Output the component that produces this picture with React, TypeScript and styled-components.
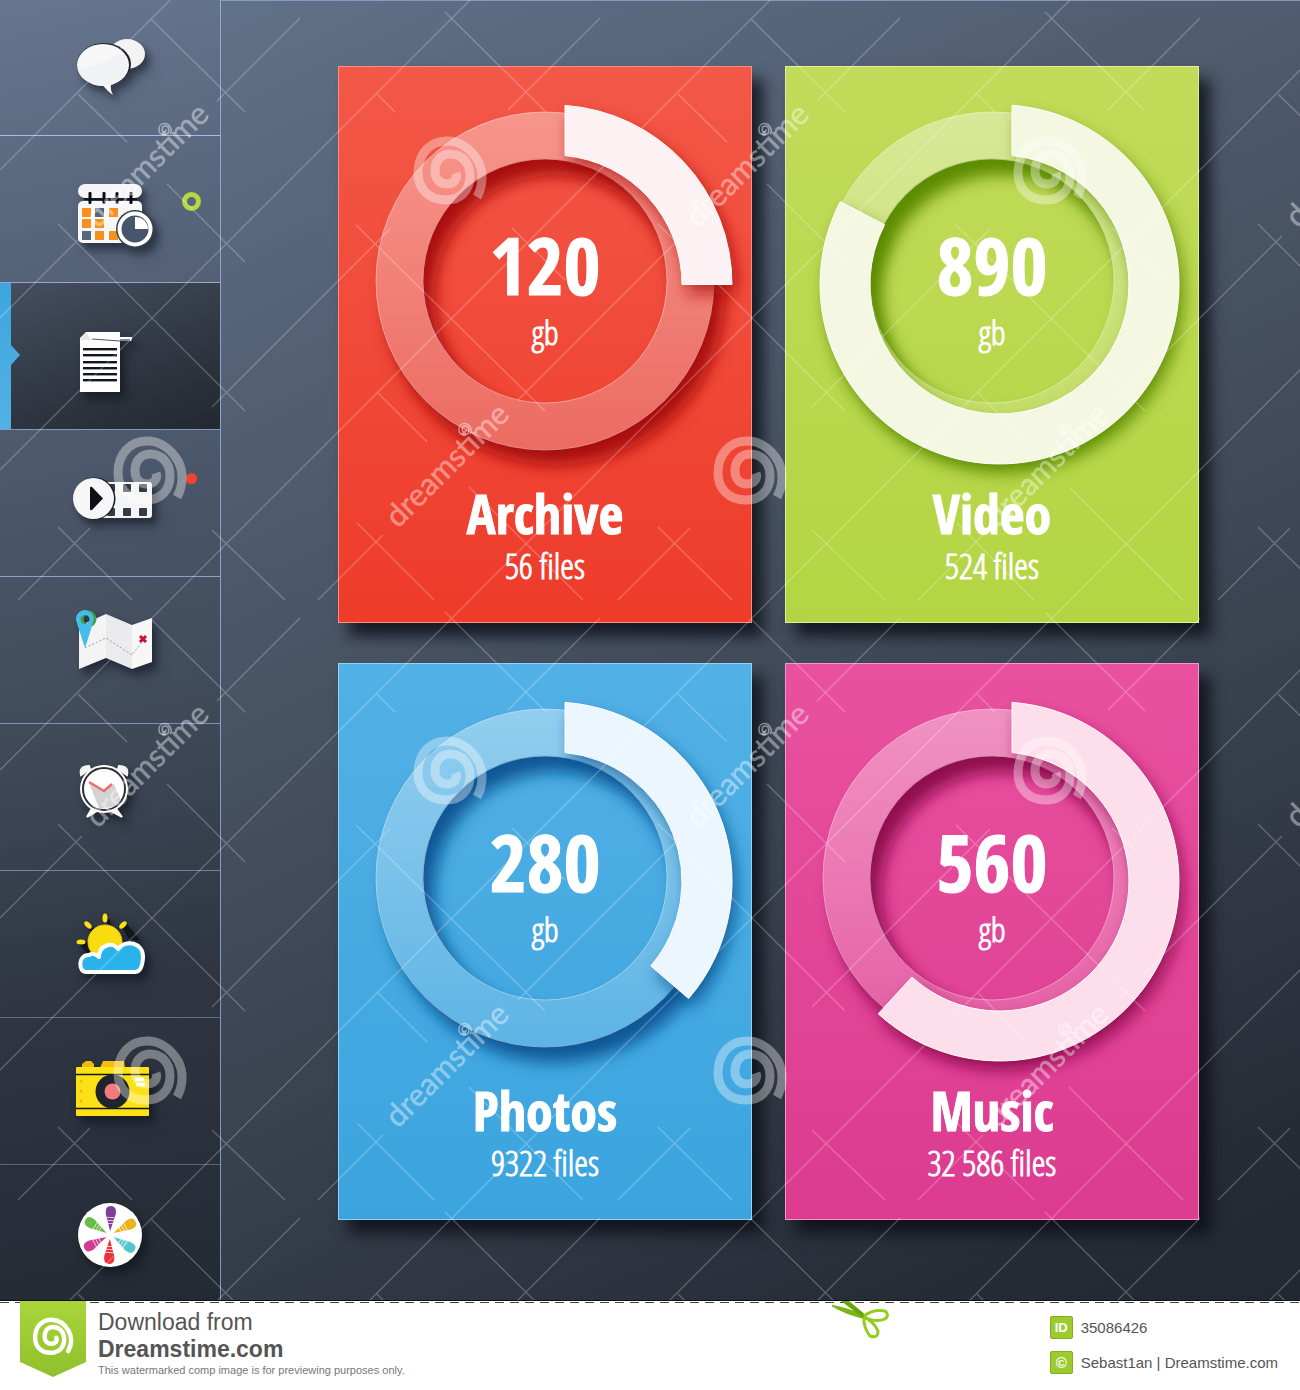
import React from "react";
import styled, { createGlobalStyle, css } from "styled-components";

const narrowBold = `"Open Sans Condensed", "Roboto Condensed", "Liberation Sans Narrow", sans-serif`;
const narrowLight = `"Open Sans Condensed Light", "Roboto Condensed", "Noto Sans Condensed", "Liberation Sans Narrow", "Open Sans Condensed", sans-serif`;

const GlobalStyle = createGlobalStyle`
  *, *::before, *::after { box-sizing: border-box; }
  body {
    margin: 0;
    background: #fff;
    font-family: "Liberation Sans", Arial, sans-serif;
  }
`;

const Board = styled.div`
  position: relative;
  display: grid;
  grid-template-columns: 221px 1fr;
  overflow: hidden;
`;

const Sidebar = styled.nav`
  display: flex;
  flex-direction: column;
  border-right: 1px solid rgba(160, 190, 235, 0.75);
  background: linear-gradient(168deg, #66768f 0%, #525f74 25%, #424d5d 52%, #2f3642 75%, #242a34 100%);
`;

const NavButton = styled.button<{ $line: string; $active?: boolean; $height?: number }>`
  position: relative;
  display: flex;
  justify-content: center;
  align-items: flex-start;
  height: ${(p) => p.$height ?? 147}px;
  padding: 25px 0 0;
  border: 0;
  border-bottom: 1px solid ${(p) => p.$line};
  background: none;
  cursor: pointer;
  ${(p) =>
    p.$active &&
    css`
      background: linear-gradient(160deg, #454f5f 0%, #343c48 45%, #232830 100%);
      &::before {
        content: "";
        position: absolute;
        left: 0;
        top: 0;
        width: 20px;
        height: 100%;
        background: linear-gradient(#3ea5de, #52b1e6);
        clip-path: polygon(0 0, 11px 0, 11px 62px, 20px 72px, 11px 82px, 11px 100%, 0 100%);
      }
    `}
`;

const Glyph = styled.svg`
  width: 96px;
  height: 96px;
  overflow: visible;
  filter: drop-shadow(4px 5px 3px rgba(10, 14, 22, 0.35)) drop-shadow(5px 7px 5px rgba(10, 14, 22, 0.3));
`;

const RingBadge = styled.span`
  position: absolute;
  right: 19px;
  top: 56px;
  width: 19px;
  height: 19px;
  border: 5px solid #b5d73f;
  border-radius: 50%;
`;

const DotBadge = styled.span`
  position: absolute;
  right: 23px;
  top: 43px;
  width: 11px;
  height: 11px;
  border-radius: 50%;
  background: #f04432;
`;

const Main = styled.main`
  display: grid;
  grid-template-columns: 1fr 1fr;
  gap: 40px 33px;
  align-content: start;
  padding: 65px 101px 80px 117px;
  border-top: 1px solid rgba(160, 190, 235, 0.75);
  background: linear-gradient(155deg, #617189 0%, #4d596b 32%, #3a4350 62%, #262c36 90%, #222831 100%);
`;

const Card = styled.article<{ $from: string; $to: string; $edge: string }>`
  display: flex;
  flex-direction: column;
  align-items: center;
  height: 557px;
  border: 1px solid ${(p) => p.$edge};
  background: linear-gradient(${(p) => p.$from}, ${(p) => p.$to});
  box-shadow: 11px 13px 14px rgba(10, 13, 20, 0.8);
  color: #fff;
  -webkit-text-stroke: 1px #fff;
`;

const Gauge = styled.div`
  display: grid;
  justify-items: center;
  > * { grid-area: 1 / 1; }
`;

const Dial = styled.svg`
  width: 412px;
  height: 412px;
  overflow: visible;
`;

const Reading = styled.div`
  display: flex;
  flex-direction: column;
  align-items: center;
  padding-top: 152px;
  z-index: 1;
`;

const Amount = styled.strong`
  font-family: ${narrowBold};
  font-size: 80px;
  line-height: 90px;
  font-weight: 700;
`;

const Unit = styled.span`
  font-family: ${narrowLight};
  font-size: 34px;
  line-height: 46px;
  font-weight: 300;
`;

const Title = styled.h2`
  margin: 0;
  font-family: ${narrowBold};
  font-size: 54px;
  line-height: 68px;
  font-weight: 700;
`;

const Files = styled.p`
  margin: 0;
  font-family: ${narrowLight};
  font-size: 35px;
  line-height: 38px;
  font-weight: 300;
`;

const Overlay = styled.svg`
  position: absolute;
  inset: 0;
  width: 100%;
  height: 100%;
  pointer-events: none;
`;

const Footer = styled.footer`
  position: relative;
  display: flex;
  justify-content: space-between;
  height: 90px;
  padding: 0 22px 0 20px;
  border-top: 1px solid #111;
  background: repeating-linear-gradient(90deg, #444 0 9px, transparent 9px 15px) 0 1px / 100% 1px no-repeat, #fff;
  color: #555;
`;

const Brand = styled.a`
  display: flex;
  gap: 12px;
  color: inherit;
  text-decoration: none;
`;

const Flag = styled.svg`
  width: 66px;
  height: 78px;
`;

const BrandText = styled.div`
  display: flex;
  flex-direction: column;
  padding-top: 8px;
`;

const BrandLine = styled.span<{ $bold?: boolean }>`
  font-size: 23px;
  line-height: 27px;
  font-weight: ${(p) => (p.$bold ? 700 : 400)};
`;

const Notice = styled.small`
  font-size: 11px;
  line-height: 15px;
  color: #777;
`;

const Scissors = styled.svg`
  position: absolute;
  left: 64%;
  top: 0;
  width: 60px;
  height: 42px;
`;

const Credits = styled.ul`
  display: flex;
  flex-direction: column;
  gap: 12px;
  margin: 0;
  padding: 15px 0 0;
  list-style: none;
`;

const Credit = styled.li`
  display: flex;
  align-items: center;
  gap: 8px;
  font-size: 15px;
  line-height: 23px;
`;

const Tag = styled.span<{ $size: number }>`
  width: 23px;
  height: 23px;
  border: 1px solid #86ad1f;
  border-radius: 2px;
  background: #9dcb2f;
  color: #fff;
  font-size: ${(p) => p.$size}px;
  line-height: 21px;
  font-weight: 700;
  text-align: center;
`;

const SPIRAL =
  "M27 27C33 16 34 2 28 -9C20 -23 8 -29 -3 -29C-20 -29 -32 -16 -32 3C-32 19 -21 30 -4 30C11 30 20 20 20 6C20 -8 11 -16 0 -16C-10 -16 -15 -8 -15 1C-15 10 -9 14 -3 14C4 14 8 9 6 3";

const ChatIcon = () => (
  <>
    <ellipse cx="65" cy="29" rx="18" ry="15" fill="#f3f3f4" />
    <ellipse cx="42" cy="39" rx="27" ry="21" fill="#1d232d" />
    <ellipse cx="41" cy="40" rx="26" ry="21" fill="#f7f7f8" />
    <path d="M40 59Q46 67 51 70Q48 65 49 58Z" fill="#f7f7f8" />
    <path d="M16 43Q34 42 59 28Q69 38 64 47Q57 60 41 60Q18 58 16 43Z" fill="#f1f2f4" />
  </>
);

const CalendarIcon = () => (
  <>
    <rect x="16" y="23" width="64" height="14" rx="7" fill="#f5f5f6" />
    <rect x="22" y="37" width="53" height="2" fill="#14181f" />
    <rect x="16" y="40" width="64" height="42" rx="5" fill="#f7f7f7" />
    {[28, 42, 55, 69].map((x) => (
      <rect key={x} x={x - 1.5} y="31" width="3" height="12" rx="1" fill="#0b0d12" />
    ))}
    {[
      [20, 47, "#f7901e"], [33, 47, "#55657b"], [47, 47, "#f7901e"],
      [20, 58, "#f7901e"], [33, 58, "#f7901e"],
      [20, 70, "#55657b"], [33, 70, "#f7901e"], [47, 70, "#f7901e"],
    ].map(([x, y, fill]) => (
      <rect key={`${x}-${y}`} x={x} y={y} width="9" height="9" fill={String(fill)} />
    ))}
    <circle cx="73" cy="68" r="19" fill="#38434f" />
    <circle cx="73" cy="68" r="15.5" fill="#47566a" stroke="#fff" strokeWidth="4" />
    <path d="M73 68V56A12 12 0 0 1 86 68Z" fill="#fff" />
  </>
);

const DocumentIcon = () => (
  <>
    <path d="M24 24H58V84H18V30Z" fill="#fff" />
    <path d="M18 32L24 24L29 32Z" fill="#e4e6e9" />
    <path d="M30 30H70L69 33H34Z" fill="#fff" />
    <path d="M30 31L58 33" stroke="#555b66" strokeWidth="1" fill="none" />
    <path d="M58 29H70L69 32H58Z" fill="#fff" />
    <path d="M58 32H68" stroke="#0b0d12" strokeWidth="1" fill="none" />
    {[41, 47, 54, 60, 66, 72].map((y) => (
      <rect key={y} x="21" y={y - 1} width="34" height="2.4" fill="#12161d" />
    ))}
  </>
);

const VideoIcon = () => (
  <>
    <rect x="38" y="27" width="52" height="36" rx="3" fill="#f5f5f6" />
    {[45, 61, 77].map((x) => (
      <React.Fragment key={x}>
        <rect x={x} y="29" width="8" height="8" rx="1" fill="#333b47" />
        <rect x={x} y="53" width="8" height="8" rx="1" fill="#333b47" />
      </React.Fragment>
    ))}
    <circle cx="32.5" cy="43.5" r="21" fill="#14181f" />
    <circle cx="31.5" cy="43.5" r="20.5" fill="#f7f7f8" />
    <path d="M28 33Q28 31 30 32L41 43.5L30 55Q28 56 28 54Z" fill="#0c0f14" />
  </>
);

const MapIcon = () => (
  <>
    <path d="M17 24L44 12V56L17 67Z" fill="#f4f4f5" />
    <path d="M44 12L70 23V67L44 56Z" fill="#ebebed" />
    <path d="M70 23L90 16V60L70 67Z" fill="#f7f7f8" />
    <path d="M23 46L44 36L70 53L80 40" fill="none" stroke="#999" strokeDasharray="2 2" />
    <path d="M78 34L84 40M84 34L78 40" stroke="#c8102e" strokeWidth="3" />
    <circle cx="26" cy="17" r="6.5" fill="none" stroke="#43a047" strokeWidth="4" />
    <path d="M23 8A9 9 0 0 0 14 18Q17 28 23 46Q29 28 31.500 18A9 9 0 0 0 23 8ZM23 13A4.500 4.500 0 1 1 22.900 13Z" fill="#45bde8" fillRule="evenodd" />
  </>
);

const ClockIcon = () => (
  <>
    <path d="M19 26Q17 17 27 17L28 20ZM65 26Q67 17 57 17L56 20Z" fill="#f4f4f4" stroke="#f4f4f4" strokeWidth="2" />
    <path d="M29 61L25 68L33 63ZM55 61L60 68L51 63Z" fill="#fff" stroke="#fff" strokeWidth="2" />
    <circle cx="42" cy="40" r="24" fill="#fff" />
    <circle cx="42" cy="40" r="21" fill="#fff" stroke="#2b2f36" strokeWidth="2" />
    <path d="M27 34L42 43L52 35L59 51Q51 61 37 59Z" fill="#d3d3d4" />
    <path d="M27 33L42 42L50 35" stroke="#f26a6a" strokeWidth="2.500" fill="none" />
  </>
);

const WeatherIcon = () => (
  <>
    <path d="M16 47L30 62L38 50L24 45ZM23 28L34 42L36 34L28 30ZM41 20L50 34L48 24ZM59 30L68 44L78 44L64 27Z" fill="#11151c" />
    <circle cx="43" cy="46" r="17" fill="#f9dc10" stroke="#f4c40f" strokeWidth="1" />
    <ellipse cx="19" cy="46" rx="4.500" ry="2.500" fill="#fbe116" />
    <ellipse cx="26" cy="29" rx="4.500" ry="2.500" transform="rotate(45 26 29)" fill="#fbe116" />
    <ellipse cx="43" cy="22" rx="2.500" ry="4.500" fill="#fbe116" />
    <ellipse cx="61" cy="29" rx="4.500" ry="2.500" transform="rotate(-45 61 29)" fill="#fbe116" />
    <path d="M24 76C16 76 16 58 27 59C30 57 34 58 37 61C37 49 51 45 56 53C63 43 82 46 81 62Q80 76 73 76Z" fill="#29b3ea" stroke="#fff" strokeWidth="4" strokeLinejoin="round" />
  </>
);

const CameraIcon = () => (
  <>
    <path d="M20 24V21L24 18H29L32 21V24Z" fill="#f2b90f" />
    <path d="M38 25L41 18H62L63 25Z" fill="#f6bd12" />
    <rect x="14" y="24" width="73" height="49" rx="1" fill="#fbe216" />
    <path d="M14 31.500H87M14 65.500H87" stroke="#11151c" strokeWidth="1.500" />
    <circle cx="50.500" cy="48.500" r="17" fill="#20242c" />
    <circle cx="50.500" cy="48.500" r="8" fill="#f27b80" />
    <path d="M73 36.500H82M74 41.500H83" stroke="#fff" strokeWidth="3.500" />
    {[38, 48, 58].map((y) => (
      <circle key={y} cx="19" cy={y} r="1.500" fill="#f3b414" />
    ))}
  </>
);

const petals = ["#7f3f98", "#e9b51e", "#56c5d0", "#ed2f3b", "#d43a95", "#69bd45"];

const FlowerIcon = () => (
  <>
    <circle cx="48" cy="45" r="32" fill="#fff" />
    {petals.map((fill, i) => (
      <g key={fill} transform={`rotate(${i * 60 + 2} 48 45)`}>
        <path d="M48 41L43 24Q42 16 48 16Q54 16 53 24Z" fill={fill} />
        <path d="M44 27.500H52M44 30.500H52M45 33.500H51" stroke="#fff" strokeWidth="0.700" />
      </g>
    ))}
  </>
);

const navItems = [
  { name: "Messages", Icon: ChatIcon, line: "rgba(170,200,245,.9)", height: 136 },
  { name: "Calendar", Icon: CalendarIcon, line: "rgba(160,188,235,.8)", badge: "ring" },
  { name: "Documents", Icon: DocumentIcon, line: "rgba(160,188,235,.7)", active: true },
  { name: "Videos", Icon: VideoIcon, line: "rgba(160,188,235,.75)", badge: "dot" },
  { name: "Maps", Icon: MapIcon, line: "rgba(150,178,225,.7)" },
  { name: "Alarm", Icon: ClockIcon, line: "rgba(150,178,225,.6)" },
  { name: "Weather", Icon: WeatherIcon, line: "rgba(140,165,215,.5)" },
  { name: "Camera", Icon: CameraIcon, line: "rgba(140,165,215,.45)" },
  { name: "Gallery", Icon: FlowerIcon, line: "transparent", height: 135 },
];

const cards = [
  { title: "Archive", amount: "120", files: "56 files", angle: 90, from: "#f35848", to: "#ee3b2a", edge: "#f8907f", shade: "#a80f08", fill: "#fdf2f3" },
  { title: "Video", amount: "890", files: "524 files", angle: 297.5, from: "#c2db5a", to: "#b3d543", edge: "#e2f09a", shade: "#5c8a00", fill: "#f4f8e2" },
  { title: "Photos", amount: "280", files: "9322 files", angle: 130.7, from: "#52b1e6", to: "#3ba4de", edge: "#93d2f3", shade: "#0a5696", fill: "#ebf6fe" },
  { title: "Music", amount: "560", files: "32 586 files", angle: 222.5, from: "#e9519f", to: "#dc3b90", edge: "#f49ac6", shade: "#8f0b50", fill: "#fddfeb" },
];

const CX = 213.5;
const CY = 217.5;
const OUTER = 179.5;
const INNER = 129.5;
const START = 12.5;

function arcPath(angle: number) {
  const a = (angle * Math.PI) / 180;
  const at = (r: number) => `${(CX + r * Math.sin(a)).toFixed(1)} ${(CY - r * Math.cos(a)).toFixed(1)}`;
  const top = (r: number) => `${CX + START} ${(CY - Math.sqrt(r * r - START * START)).toFixed(1)}`;
  const large = angle > 184 ? 1 : 0;
  return `M${top(OUTER)}A${OUTER} ${OUTER} 0 ${large} 1 ${at(OUTER)}L${at(INNER)}A${INNER} ${INNER} 0 ${large} 0 ${top(INNER)}Z`;
}

type CardData = (typeof cards)[number];

const StorageCard = ({ title, amount, files, angle, from, to, edge, shade, fill }: CardData) => (
  <Card $from={from} $to={to} $edge={edge}>
    <Gauge>
      <Dial viewBox="0 0 412 412" aria-hidden="true">
        <defs>
          <linearGradient id={`${title}-tint`} x1="0" y1="0" x2="0" y2="1">
            <stop offset="0" stopColor="#fff" stopOpacity=".38" />
            <stop offset="1" stopColor={title === "Archive" ? "#e6a5a5" : "#fff"} stopOpacity={title === "Archive" ? 0.4 : 0.14} />
          </linearGradient>
          <filter id={`${title}-soft`} x="-20%" y="-20%" width="150%" height="150%">
            <feGaussianBlur stdDeviation="8" />
          </filter>
          <mask id={`${title}-cut`} maskUnits="userSpaceOnUse" x="0" y="0" width="412" height="440">
            <rect width="412" height="440" fill="#fff" />
            <circle cx="206" cy="214" r="145.500" fill="none" stroke="#000" strokeWidth="46" />
          </mask>
        </defs>
        <g mask={`url(#${title}-cut)`}>
          <circle cx="216" cy="229" r="145" fill="none" stroke={shade} strokeWidth="48" filter={`url(#${title}-soft)`} />
        </g>
        <path
          d="M37 214A169 169 0 1 1 375 214A169 169 0 1 1 37 214ZM84 214A122 122 0 1 0 328 214A122 122 0 1 0 84 214Z"
          fill={`url(#${title}-tint)`}
          stroke="#fff"
          strokeOpacity=".42"
        />
        <path d={arcPath(angle)} fill={shade} opacity=".75" transform="translate(5 9)" filter={`url(#${title}-soft)`} />
        <path d={arcPath(angle)} fill={fill} stroke="#fff" />
      </Dial>
      <Reading>
        <Amount>{amount}</Amount>
        <Unit>gb</Unit>
      </Reading>
    </Gauge>
    <Title>{title}</Title>
    <Files>{files}</Files>
  </Card>
);

const fallLines =
  "M151 19L245 112M78 94L127 142M167 184L245 262M58 224L245 411M58 527L132 600M212 530L285 600M445 12L545 111M356 225L545 411M512 228L565 280M376 93L395 112M378 393L427 442M357 523L434 600M469 487L583 600";
const riseLines =
  "M0 170L170 0M0 470L470 0M170 600L600 170M470 600L600 470M217 101L300 18M0 318L82 236M508 110L600 18M212 407L390 229M18 600L90 528M300 618L383 535M518 400L600 318";

const marks = [
  { x: 150, y: 170 },
  { x: 450, y: 470 },
];

const Watermark = () => (
  <Overlay aria-hidden="true">
    <defs>
      <pattern id="mesh" width="600" height="600" patternUnits="userSpaceOnUse">
        <path d={fallLines + riseLines} stroke="#fff" strokeOpacity=".24" strokeWidth="1.300" fill="none" />
        {marks.map(({ x, y }) => (
          <g key={x}>
            <text
              transform={`translate(${x - 52} ${y + 59}) rotate(-45)`}
              fontFamily="Lato, sans-serif"
              fontSize="31"
              fill="#fff"
              fillOpacity=".38"
              stroke="#fff"
              strokeOpacity=".14"
            >
              dreamstime
            </text>
            <path
              d={SPIRAL}
              transform={`translate(${x === 150 ? 450 : 150} ${y})`}
              stroke="#fff"
              strokeOpacity=".36"
              strokeWidth="9"
              fill="none"
            />
            <path d={SPIRAL} transform={`translate(${x + 15} ${y - 41}) scale(.19)`} stroke="#fff" strokeOpacity=".45" strokeWidth="8" fill="none" />
          </g>
        ))}
      </pattern>
    </defs>
    <rect width="100%" height="100%" fill="url(#mesh)" />
  </Overlay>
);

export default function App() {
  return (
    <>
      <GlobalStyle />
      <Board>
        <Sidebar aria-label="Sections">
          {navItems.map(({ name, Icon, line, height, active, badge }) => (
            <NavButton key={name} type="button" aria-label={name} $line={line} $height={height} $active={active}>
              <Glyph viewBox="0 0 96 96" aria-hidden="true">
                <Icon />
              </Glyph>
              {badge === "ring" && <RingBadge />}
              {badge === "dot" && <DotBadge />}
            </NavButton>
          ))}
        </Sidebar>
        <Main>
          {cards.map((card) => (
            <StorageCard key={card.title} {...card} />
          ))}
        </Main>
        <Watermark />
      </Board>
      <Footer>
        <Brand href="#">
          <Flag viewBox="0 0 66 78" aria-hidden="true">
            <defs>
              <linearGradient id="flag" x1="0" y1="0" x2="0" y2="1">
                <stop offset="0" stopColor="#a9d53a" />
                <stop offset="1" stopColor="#8fc02c" />
              </linearGradient>
            </defs>
            <path d="M0 0H66V61L33 76L0 61Z" fill="url(#flag)" />
            <path d={SPIRAL} transform="translate(33 35) scale(.56)" stroke="#fff" strokeWidth="8" strokeLinecap="round" fill="none" />
          </Flag>
          <BrandText>
            <BrandLine>Download from</BrandLine>
            <BrandLine $bold>Dreamstime.com</BrandLine>
            <Notice>This watermarked comp image is for previewing purposes only.</Notice>
          </BrandText>
        </Brand>
        <Scissors viewBox="0 0 60 42" aria-hidden="true">
          <path d="M-4 3Q16 6 34 15L32 18Q11 13 -4 3Z" fill="#7db515" />
          <path d="M9 0H17L35 15L32 18Q21 9 9 0Z" fill="#69a50a" />
          <path d="M32 15Q41 8 53 10Q58 14 53 18Q44 22 32 16M32 16Q31 26 38 35Q46 38 46 30Q43 22 32 16" fill="none" stroke="#93cc1d" strokeWidth="3" />
        </Scissors>
        <Credits>
          <Credit>
            <Tag $size={13}>ID</Tag>
            35086426
          </Credit>
          <Credit>
            <Tag $size={15}>©</Tag>
            Sebast1an | Dreamstime.com
          </Credit>
        </Credits>
      </Footer>
    </>
  );
}
